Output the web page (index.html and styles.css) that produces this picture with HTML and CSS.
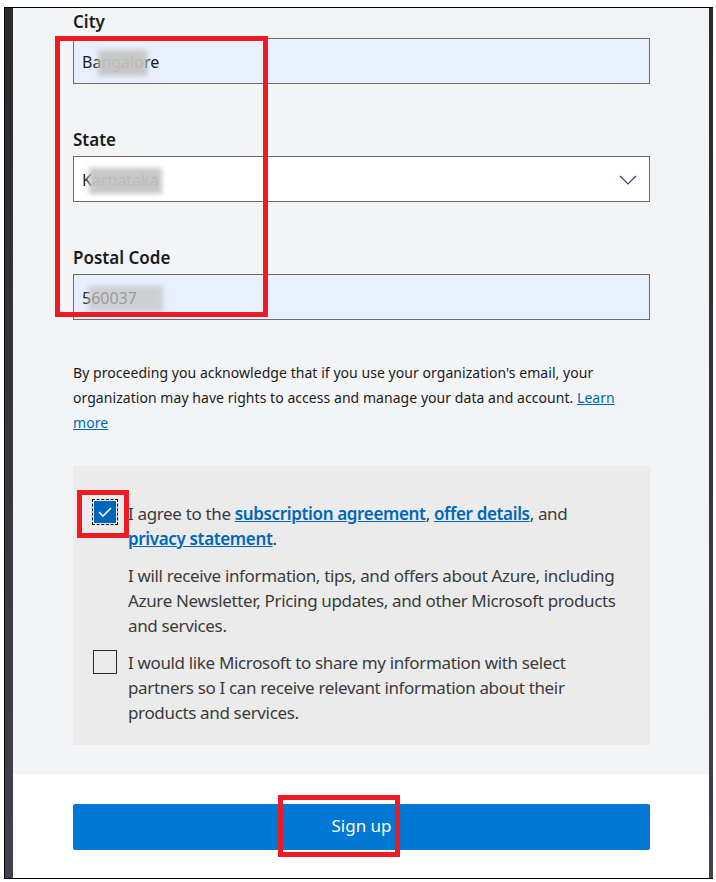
FILE: index.html
```html
<!DOCTYPE html>
<html lang="en">
<head>
<meta charset="utf-8">
<title>Sign up</title>
<link rel="stylesheet" href="styles.css">
</head>
<body>
<div class="window">
  <div class="strip-left"></div>
  <div class="main">
    <div class="form">
      <div class="field">
        <label class="label">City</label>
        <div class="input autofill"><span class="val">Ba<span class="blur">ngalo</span>re</span></div>
      </div>
      <div class="field">
        <label class="label">State</label>
        <div class="input select"><span class="val">K<span class="blur">arnataka</span></span>
          <svg class="chev" width="18" height="10" viewBox="0 0 18 10"><polyline points="1,1 9,9 17,1" fill="none" stroke="#2f4a6b" stroke-width="1.2"/></svg>
        </div>
      </div>
      <div class="field">
        <label class="label">Postal Code</label>
        <div class="input autofill"><span class="val">5<span class="blur wide">60037</span></span></div>
      </div>
      <p class="notice">By proceeding you acknowledge that if you use your organization's email, your<br>organization may have rights to access and manage your data and account. <a href="#" class="link">Learn</a><br><a href="#" class="link">more</a></p>
      <div class="consent">
        <div class="row">
          <span class="check checked"><svg width="16" height="12" viewBox="0 0 16 12"><polyline points="2,6 6,10 14,2" fill="none" stroke="#fff" stroke-width="1.6"/></svg></span>
          <p class="ctext">I agree to the <a href="#" class="blink">subscription agreement</a>, <a href="#" class="blink">offer details</a>, and<br><a href="#" class="blink">privacy statement</a>.</p>
        </div>
        <div class="row">
          <span></span>
          <p class="ctext">I will receive information, tips, and offers about Azure, including<br>Azure Newsletter, Pricing updates, and other Microsoft products<br>and services.</p>
        </div>
        <div class="row">
          <span class="check"></span>
          <p class="ctext">I would like Microsoft to share my information with select<br>partners so I can receive relevant information about their<br>products and services.</p>
        </div>
      </div>
    </div>
    <div class="footer">
      <button class="signup">Sign up</button>
    </div>
  </div>
  <div class="strip-right"></div>
</div>
<div class="mark mark-fields"></div>
<div class="mark mark-check"></div>
<div class="mark mark-button"></div>
</body>
</html>
```

FILE: styles.css
```css
* { box-sizing: border-box; }
html, body { margin: 0; padding: 0; }
body {
  width: 716px;
  height: 882px;
  overflow: hidden;
  background: #ffffff;
  font-family: "Noto Sans", "Open Sans", sans-serif;
  color: #1b1b1b;
  position: relative;
}
.window {
  margin: 7px 3px 0 4px;
  height: 872px;
  border-top: 1px solid #000;
  border-bottom: 1px solid #000;
  border-left: 1px solid #000;
  display: flex;
}
.strip-left {
  width: 8px;
  background: linear-gradient(#2b2b2e, #42424c);
}
.strip-right {
  width: 4px;
  background: linear-gradient(#2b2b2e, #42424c);
}
.main {
  flex: 1;
  display: flex;
  flex-direction: column;
}
.form {
  height: 766px;
  background: #f3f4f6;
  padding: 2px 59px 0 60px;
}
.field { margin-bottom: 44px; }
.field:nth-child(3) { margin-bottom: 0; }
.label {
  display: block;
  font-size: 17px;
  line-height: 24px;
  font-weight: 600;
  color: #1b1b1b;
  margin-bottom: 4px;
}
.input {
  height: 46px;
  border: 1px solid #6b6b6b;
  background: #fff;
  display: flex;
  align-items: center;
  justify-content: space-between;
  padding: 2px 12px 0 8px;
  font-size: 16px;
  color: #1b1b1b;
}
.input.autofill { background: #e8f0fe; }
.val { white-space: nowrap; }
.blur { position: relative; }
.blur::after {
  content: "";
  position: absolute;
  left: -3px; right: -3px; top: -1px; bottom: -3px;
  background: rgba(196, 196, 196, 0.95);
  filter: blur(2.5px);
}
.blur.wide::after { right: -26px; background: rgba(196, 196, 196, 0.75); }
.chev { margin-top: 0; }
.notice {
  margin: 40px 0 0;
  font-size: 14px;
  line-height: 25px;
  color: #1b1b1b;
  letter-spacing: 0.05px;
}
.link { color: #0067b8; text-decoration: underline; }
.consent {
  margin-top: 31px;
  background: #ebebeb;
  padding: 35px 10px 20px 20px;
}
.row {
  display: grid;
  grid-template-columns: 35px 1fr;
  margin-bottom: 12px;
}
.row:last-child { margin-bottom: 0; }
.ctext {
  margin: 0;
  font-size: 17px;
  line-height: 25px;
  color: #3b3b3b;
  letter-spacing: -0.35px;
  white-space: nowrap;
}
.blink {
  color: #0067b8;
  font-weight: 600;
  text-decoration: underline;
}
.check {
  width: 24px;
  height: 24px;
  border: 1px solid #2b2b2b;
  background: #ebebeb;
  margin-top: 0;
  display: flex;
  align-items: center;
  justify-content: center;
}
.check.checked {
  width: 22px;
  height: 22px;
  margin: 0 0 0 1px;
  background: #0067b8;
  border: 0;
  outline: 1px dashed #000;
  outline-offset: 1px;
}
.footer {
  flex: 1;
  background: #fff;
  padding: 30px 59px 0 60px;
}
.signup {
  display: block;
  width: 100%;
  height: 46px;
  padding: 0 0 3px;
  background: #0078d4;
  border: 0;
  border-radius: 2px;
  color: #fff;
  font-family: "Noto Sans", "Open Sans", sans-serif;
  font-size: 17px;
}
.mark {
  position: absolute;
  border: 5px solid #ed1c24;
}
.mark-fields { left: 55px; top: 36px; width: 213px; height: 281px; }
.mark-check { left: 77px; top: 490px; width: 52px; height: 48px; }
.mark-button { left: 278px; top: 795px; width: 122px; height: 62px; }
```
